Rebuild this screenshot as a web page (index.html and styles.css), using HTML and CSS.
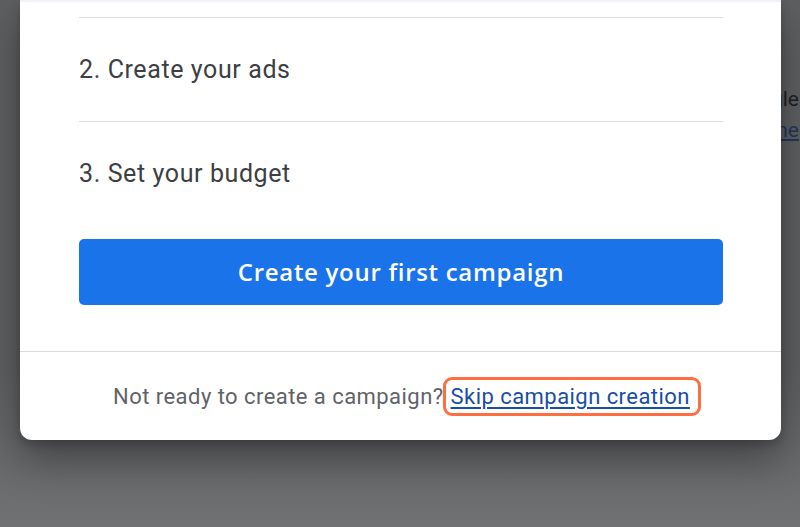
FILE: index.html
```html
<!DOCTYPE html>
<html>
<head>
<meta charset="utf-8">
<link rel="stylesheet" href="styles.css">
</head>
<body>
<div class="behind">
  <span class="behind-text">Google</span>
  <span class="behind-link">Go online</span>
</div>
<div class="scrim"></div>
<div class="dialog">
  <div class="dialog-body">
    <div class="steps">
      <div class="step">2. Create your ads</div>
      <div class="step">3. Set your budget</div>
    </div>
    <button class="primary">Create your first campaign</button>
  </div>
  <div class="dialog-footer">
    <span class="hint">Not ready to create a campaign?</span><a class="skip" href="#">Skip campaign creation</a>
  </div>
</div>
</body>
</html>
```
FILE: styles.css
```css
html, body {
  margin: 0;
  padding: 0;
  width: 800px;
  height: 527px;
  overflow: hidden;
}
body {
  position: relative;
  background: #fff;
  font-family: Roboto, "Liberation Sans", sans-serif;
}
.behind {
  position: absolute;
  left: 0;
  top: 0;
  width: 800px;
  height: 527px;
}
.behind-text {
  position: absolute;
  right: 1px;
  top: 87px;
  font-size: 21px;
  color: #202124;
  white-space: nowrap;
}
.behind-link {
  position: absolute;
  right: 1px;
  top: 118px;
  font-size: 21px;
  color: #1a73e8;
  text-decoration: underline;
  white-space: nowrap;
}
.scrim {
  position: absolute;
  inset: 0;
  background: linear-gradient(to bottom, rgba(32,33,36,0.72) 0%, rgba(32,33,36,0.72) 70%, rgba(32,33,36,0.64) 100%);
}
.dialog {
  position: relative;
  margin-left: 20px;
  width: 761px;
  background: #fff;
  border-top: 2px solid #f3f2f8;
  border-radius: 0 0 12px 12px;
  box-shadow: 0 20px 40px rgba(0,0,0,0.35), 0 4px 10px rgba(0,0,0,0.2);
}
.dialog-body {
  padding: 15px 58px 46px 59px;
}
.steps {
  display: flex;
  flex-direction: column;
}
.step {
  height: 103px;
  border-top: 1px solid #dadce0;
  display: flex;
  align-items: center;
  font-size: 25px;
  color: #3c4043;
  letter-spacing: 0.6px;
}
.primary {
  display: block;
  width: 100%;
  height: 66px;
  margin-top: 14px;
  border: none;
  border-radius: 5px;
  background: #1a73e8;
  color: #fff;
  font-family: "Open Sans", Roboto, sans-serif;
  font-size: 24px;
  font-weight: 600;
  letter-spacing: 0.7px;
  padding-bottom: 2px;
}
.dialog-footer {
  border-top: 1px solid #dadce0;
  height: 88px;
  display: flex;
  align-items: center;
  justify-content: center;
  font-size: 22px;
  letter-spacing: 0.45px;
  padding-left: 2px;
}
.hint {
  color: #5f6368;
}
.skip {
  position: relative;
  margin-left: 7px;
  color: #174ea6;
  text-decoration: underline;
  text-underline-offset: 3px;
}
.skip::after {
  content: "";
  position: absolute;
  left: -8px;
  right: -11px;
  top: -7px;
  bottom: -7px;
  border: 3.5px solid #ff6e40;
  border-radius: 9px;
}
```
